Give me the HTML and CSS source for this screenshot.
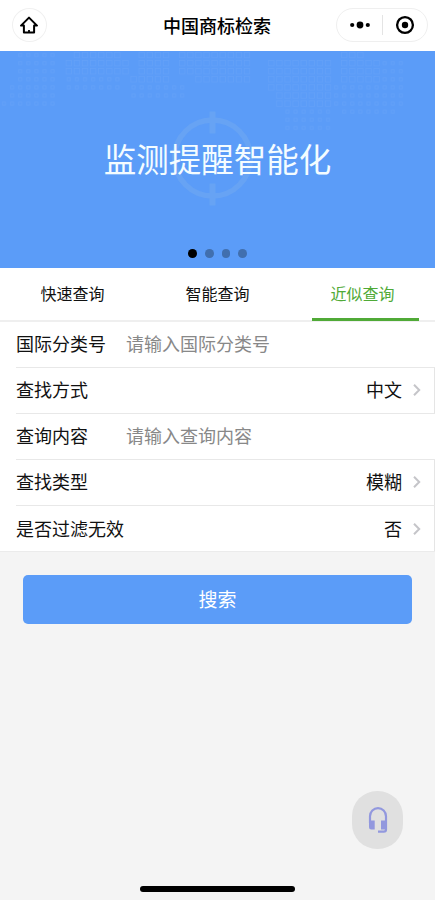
FILE: index.html
```
<!DOCTYPE html>
<html lang="zh-CN">
<head>
<meta charset="utf-8">
<title>中国商标检索</title>
<link rel="stylesheet" href="styles.css">
</head>
<body>
<header class="navbar">
  <div class="home">
    <svg width="20" height="20" viewBox="0 0 20 20" fill="none" stroke="#000" stroke-width="2" stroke-linejoin="round"><path d="M10 2.6 2 10.6h2.9v6.8h10.2v-6.8H18z"/><path d="M10 15V17" stroke-width="1.8"/></svg>
  </div>
  <h1 class="title">中国商标检索</h1>
  <div class="capsule">
    <svg class="more" width="20" height="8" viewBox="0 0 20 8"><circle cx="2.2" cy="4" r="2.1"/><circle cx="10" cy="4" r="3.4"/><circle cx="17.8" cy="4" r="2.1"/></svg>
    <span class="divider"></span>
    <svg class="close" width="20" height="20" viewBox="0 0 20 20"><circle cx="10" cy="10" r="7.9" fill="none" stroke="#000" stroke-width="2.3"/><circle cx="10" cy="10" r="3.2"/></svg>
  </div>
</header>

<section class="banner">
  <svg class="art" width="435" height="218" viewBox="0 0 435 218" fill="none">
    <defs>
      <pattern id="large" width="8.1" height="8.1" patternUnits="userSpaceOnUse"><rect x="1.2" y="1.2" width="5.6" height="5.6" stroke="#83b4f8" stroke-width=".7"/></pattern>
      <pattern id="small" width="8.1" height="8.1" patternUnits="userSpaceOnUse"><rect x="2.5" y="2.5" width="3" height="3" stroke="#83b4f8" stroke-width=".8"/></pattern>
    </defs>
    <g opacity=".26">
      <path fill="url(#large)" d="M64.8 8.1h64.8v16.2H64.8zM72.9 0h48.6v8.1H72.9zM129.6 24.3h40.5v8.1h-40.5zM137.7 0h32.4v24.3h-32.4zM178.2 0h40.5v24.3h-40.5zM194.4 24.3h56.7v8.1h-56.7zM218.7 0h32.4v24.3h-32.4zM267.3 8.1h64.8v32.4h-64.8zM275.4 40.5h56.7v16.2h-56.7zM340.2 0h24.3v32.4h-24.3zM364.5 8.1h16.2v24.3h-16.2z"/>
      <path fill="url(#small)" d="M16.2 0h40.5v32.4H16.2zM8.1 32.4h48.6v16.2H8.1zM0 48.6h56.7v8.1H0zM64.8 24.3h56.7v16.2H64.8zM129.6 32.4h56.7v16.2h-56.7zM283.5 56.7h48.6V81h-48.6zM332.1 32.4H405v24.3h-72.9zM380.7 8.1H405v24.3h-24.3zM340.2 56.7h56.7v8.1h-56.7z"/>
    </g>
    <g stroke="#6aa5f4" opacity=".8">
      <circle cx="212.5" cy="107" r="38" stroke-width="5.5"/>
      <path stroke-width="6" d="M212.5 60.5v22M212.5 132.5v22"/>
    </g>
  </svg>
  <p class="slogan">监测提醒智能化</p>
  <div class="dots"><i class="dot on"></i><i class="dot"></i><i class="dot"></i><i class="dot"></i></div>
</section>

<nav class="tabs">
  <a class="tab">快速查询</a>
  <a class="tab">智能查询</a>
  <a class="tab active">近似查询</a>
</nav>

<main>
  <div class="form">
    <div class="row"><span class="label">国际分类号</span><span class="hint">请输入国际分类号</span></div>
    <div class="row pick"><span class="label">查找方式</span><span class="value">中文</span><svg class="arrow" width="8" height="12" viewBox="0 0 8 12"><path d="m1 .8 5.2 5.2L1 11.2"/></svg></div>
    <div class="row"><span class="label">查询内容</span><span class="hint">请输入查询内容</span></div>
    <div class="row pick"><span class="label">查找类型</span><span class="value">模糊</span><svg class="arrow" width="8" height="12" viewBox="0 0 8 12"><path d="m1 .8 5.2 5.2L1 11.2"/></svg></div>
    <div class="row pick"><span class="label">是否过滤无效</span><span class="value">否</span><svg class="arrow" width="8" height="12" viewBox="0 0 8 12"><path d="m1 .8 5.2 5.2L1 11.2"/></svg></div>
  </div>
  <button class="search">搜索</button>
</main>

<div class="service">
  <svg width="20" height="28" viewBox="0 0 20 28"><path fill="none" stroke="#9298de" stroke-width="2.2" d="M2 17V10.2a8 8 0 0 1 16 0v13.3q0 2.2-2.2 2.2H10"/><path fill="#9298de" d="M1 14.5h5.7v9H3.2A2.2 2.2 0 0 1 1 21.3zM13 14.5h6v9h-6z"/></svg>
</div>
<div class="home-bar"></div>
</body>
</html>
```
FILE: styles.css
```
* { box-sizing: border-box; }
body {
  margin: 0;
  height: 900px;
  overflow: hidden;
  position: relative;
  background: #f4f4f4;
  color: #111;
  font-family: "Noto Sans CJK SC", sans-serif;
}
.navbar {
  height: 51px;
  padding: 0 7px 1px 12px;
  display: grid;
  grid-template-columns: 92px 1fr 92px;
  align-items: center;
  background: #fff;
}
.home {
  width: 35px;
  height: 34px;
  padding-right: 1px;
  border: 1px solid #f0f0f0;
  border-radius: 50%;
  display: flex;
  align-items: center;
  justify-content: center;
}
.title {
  margin: -1px 0 0 -6px;
  text-align: center;
  font-size: 18px;
  line-height: 26px;
  font-weight: 500;
  color: #000;
}
.capsule {
  height: 34px;
  border: 1px solid #efefef;
  border-radius: 17px;
  display: flex;
  align-items: center;
  padding-left: 13px;
}
.divider { width: 1px; height: 20px; background: #e4e4e4; margin: 0 12px; }
.banner {
  position: relative;
  height: 217px;
  background: #5b9cf8;
  color: #fff;
  overflow: hidden;
}
.art { position: absolute; left: 0; top: 0; }
.slogan {
  position: relative;
  margin: 0;
  padding-top: 83px;
  text-align: center;
  font-size: 32.5px;
  line-height: 48px;
  font-weight: 400;
  color: #f4fcff;
}
.dots {
  position: absolute;
  left: 0;
  right: 0;
  bottom: 10px;
  display: flex;
  justify-content: center;
  gap: 8px;
}
.dot { width: 8.8px; height: 8.8px; border-radius: 50%; background: #416fae; }
.dot.on { background: #000; }
.tabs {
  height: 54px;
  display: flex;
  background: #fff;
  border-bottom: 2px solid #efefef;
}
.tab {
  flex: 0 0 107px;
  height: 53px;
  margin: 0 19px;
  text-align: center;
  font-size: 16px;
  line-height: 51px;
}
.tab:last-child { margin: 0 16px 0 22px; padding-right: 6px; }
.tab.active { color: #50aa37; border-bottom: 3px solid #50aa37; }
.form { background: #fff; border-bottom: 1px solid #ebebeb; }
.row {
  height: 46px;
  margin-left: 16px;
  padding-bottom: 3px;
  display: flex;
  align-items: center;
  border-bottom: 1px solid #e8e8e8;
  font-size: 18px;
  line-height: 26px;
}
.row:last-child { height: 45px; border-bottom: 0; padding-bottom: 1px; }
.pick { padding-right: 13px; border-right: 1px solid #e5e5e5; }
.label { width: 110px; white-space: nowrap; }
.hint { color: #888; }
.value { margin-left: auto; }
.arrow { margin: 2px 0 0 11px; fill: none; stroke: #c5c5c9; stroke-width: 2; }
.search {
  display: block;
  width: 389px;
  height: 49px;
  margin: 23px 0 0 23px;
  padding: 0 0 2px;
  border: 0;
  border-radius: 5px;
  background: #5b9cf8;
  color: #fff;
  font: 19px/47px "Noto Sans CJK SC", sans-serif;
}
.service {
  position: absolute;
  left: 352px;
  top: 791px;
  width: 51px;
  height: 58px;
  border-radius: 25px;
  background: #e0e0e0;
  display: flex;
  align-items: center;
  justify-content: center;
}
.home-bar {
  position: absolute;
  left: 140px;
  top: 886px;
  width: 155px;
  height: 6px;
  border-radius: 3px;
  background: #000;
}
```
